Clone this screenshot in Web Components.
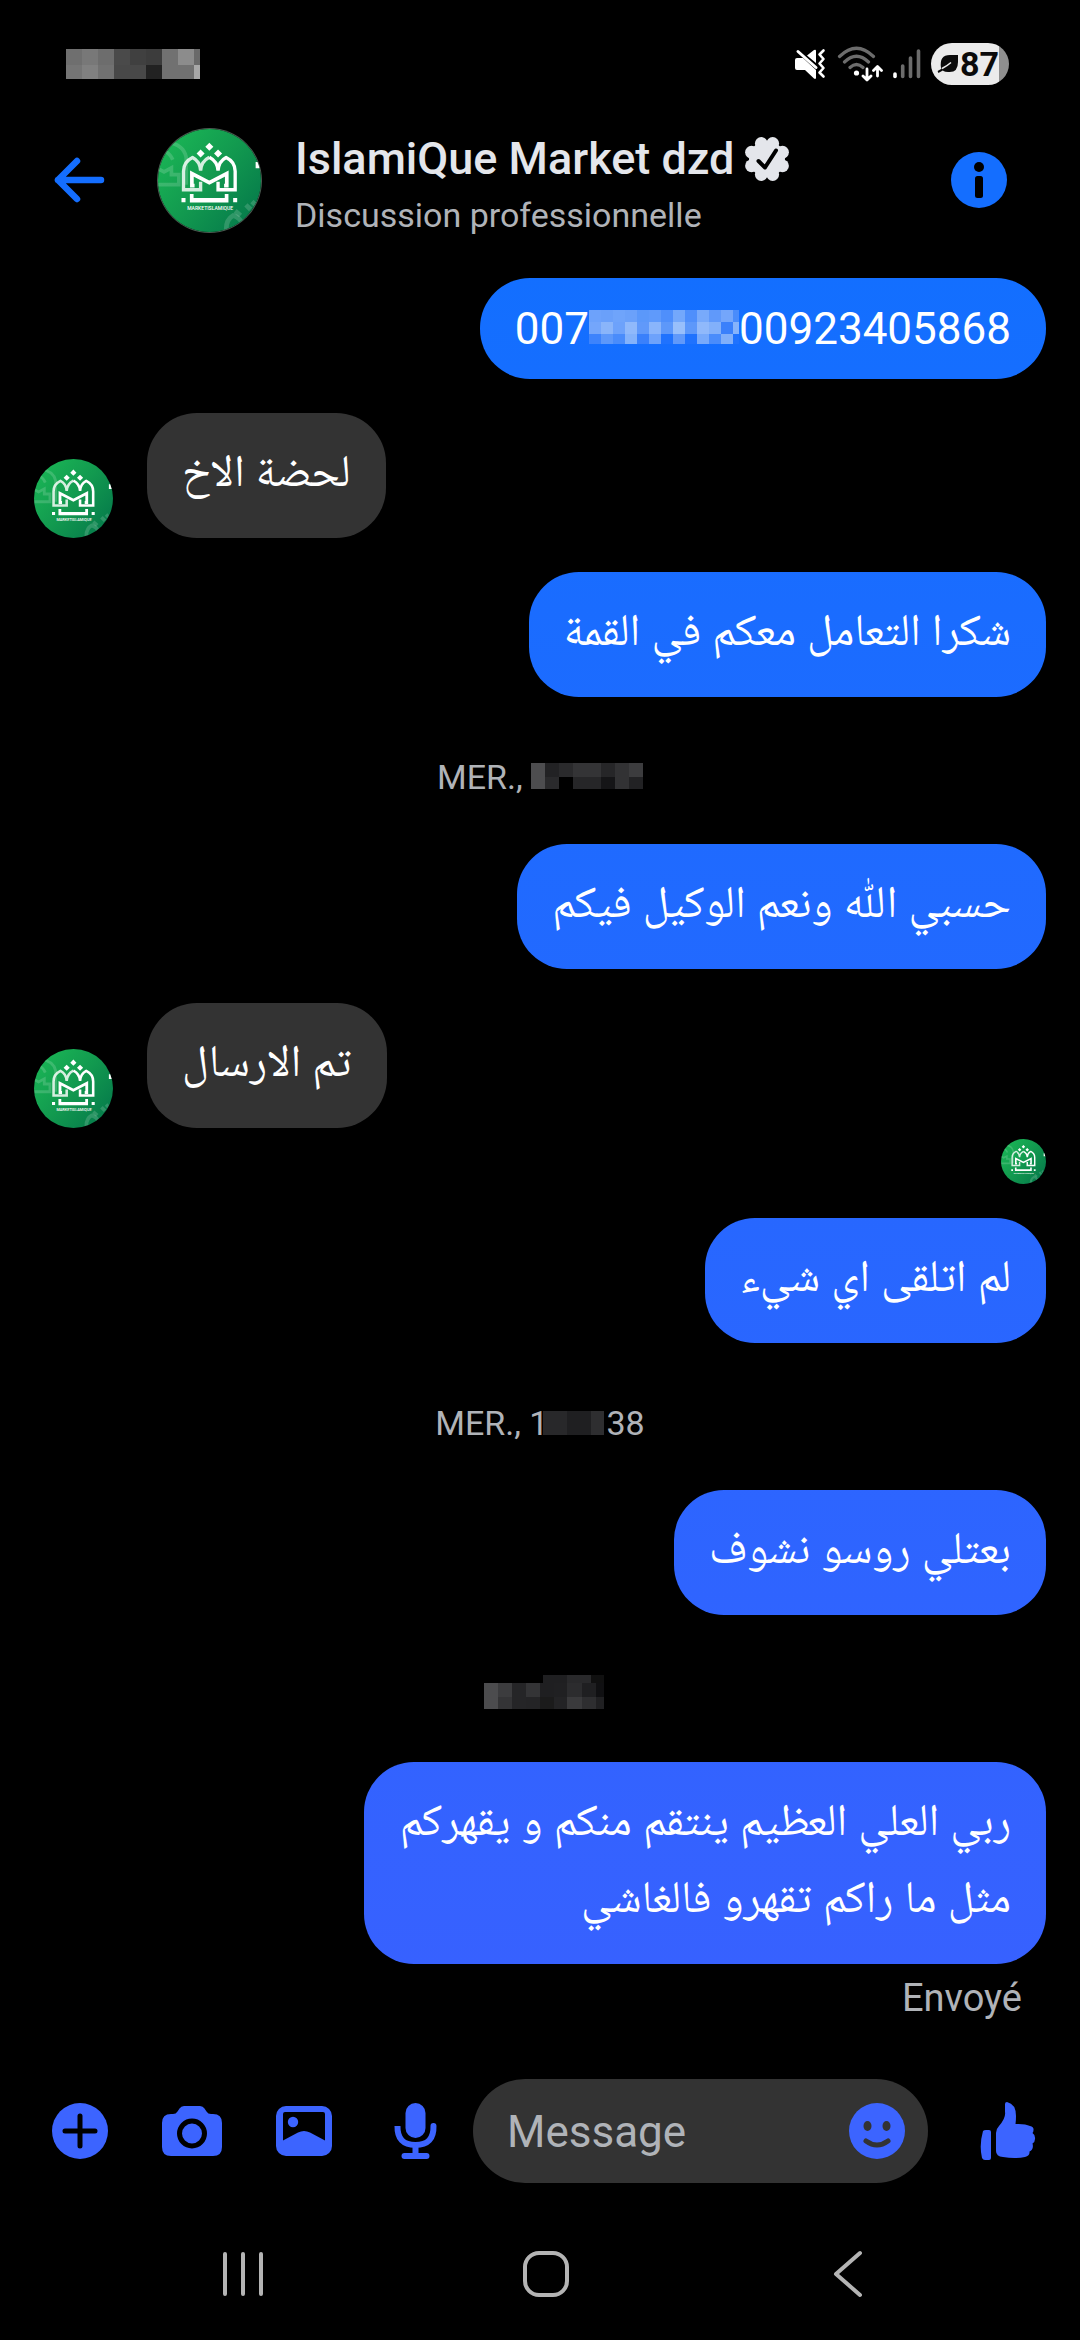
<!DOCTYPE html>
<html lang="fr">
<head>
<meta charset="utf-8">
<meta name="viewport" content="width=device-width, initial-scale=1">
<title>IslamiQue Market dzd</title>
<style>
  html { background: #000; }
  body {
    margin: 0;
    min-height: 100vh;
    display: flex;
    flex-direction: column;
    background: #000;
    color: #fff;
    font-family: Roboto, "Noto Naskh Arabic", "Noto Naskh Arabic UI", "DejaVu Sans", sans-serif;
    --accent-top: #146eff;
    --accent-bottom: #3c64ff;
    --muted: #b0b3b8;
    --surface: #333333;
  }
  chat-thread { flex: 1; }
</style>
</head>
<body>
<status-bar></status-bar>
<chat-header name="IslamiQue Market dzd" subtitle="Discussion professionnelle"></chat-header>
<chat-thread>
  <chat-message side="out" lang="fr">007<pixel-mosaic cols="12 12 12 12 12 12 12 12 12 12 12 12 6" rows="12 12 10" cells="6da2fb 6aa0fa 6fa4fb 6ba1fa 5b98fa 5f9afb 4f8ffb 74a8fb 4f8ffb 78aafb 6099fa 74a6fb 4a8cfb / 74a6fb 8ab5fa 6da2fb 90b9fb 6099fa 8ab5fb 5d98fa 98bffb 5d98fa 90b9fb 82b0fa 3a80fb 86b3fb / 3d83fc 5d98fa 4a8cfb 84b2fb 3a80fb 6da2fb 1f72fe 6099fa 1f72fe 78aafb 4a8cfb 80affa 1f72fe"></pixel-mosaic>00923405868</chat-message>
  <chat-message side="in" lang="ar">لحضة الاخ</chat-message>
  <chat-message side="out" lang="ar">شكرا التعامل معكم في القمة</chat-message>
  <chat-date>MER., <pixel-mosaic cols="14 14 14 14 14 14 14 14" rows="14 12" cells="4d4d4f 222224 2a2a2c 343436 343436 262628 323234 3c3c3e / 4d4d4f 2a2a2c 000000 262628 262628 151517 323234 222224"></pixel-mosaic></chat-date>
  <chat-message side="out" lang="ar">حسبي اللّٰه ونعم الوكيل فيكم</chat-message>
  <chat-message side="in" lang="ar">تم الارسال</chat-message>
  <seen-marker></seen-marker>
  <chat-message side="out" lang="ar">لم اتلقى اي شيء</chat-message>
  <chat-date>MER., 1<pixel-mosaic overlap cols="24 24 13" rows="24" cells="28282a 1f1f21 2e2e30"></pixel-mosaic>38</chat-date>
  <chat-message side="out" lang="ar">بعتلي روسو نشوف</chat-message>
  <chat-date><pixel-mosaic cols="8 14 14 14 14 3 11 13 15 9 5 8" rows="8 14 12" cells="000000 000000 000000 000000 000000 000000 1f1f21 1f1f21 29292b 29292b 101010 101010 / 000000 4c4c4e 3c3c3e 252527 343436 1f1f21 1f1f21 202022 2c2c2e 1f1f21 1f1f21 101012 / 000000 4c4c4e 343436 252527 242426 1b1b1b 1b1b1b 232325 3a3a3c 2e2e30 2e2e30 202022"></pixel-mosaic></chat-date>
  <chat-message side="out" lang="ar">ربي العلي العظيم ينتقم منكم و يقهركم مثل ما راكم تقهرو فالغاشي</chat-message>
  <delivery-state>Envoyé</delivery-state>
</chat-thread>
<chat-composer></chat-composer>
<system-nav></system-nav>

<script>
  const define = (name, html, setup) => {
    const template = document.createElement('template');
    template.innerHTML = html;
    customElements.define(name, class extends HTMLElement {
      constructor() {
        super();
        this.attachShadow({ mode: 'open' }).append(template.content.cloneNode(true));
      }
      connectedCallback() { if (setup) setup(this, this.shadowRoot); }
    });
  };

  /* Grid of flat cells that hides a piece of text; its bottom edge sits on the baseline. */
  define('pixel-mosaic', `
    <style>
      :host { display: inline-block; overflow: hidden; vertical-align: baseline; }
      :host([overlap]) { margin: 0 2px 0 -5px; }
      div { display: grid; }
    </style>
    <div></div>`,
    (host, root) => {
      const px = list => list.split(' ').map(n => n + 'px').join(' ');
      const grid = root.querySelector('div');
      grid.style.gridTemplateColumns = px(host.getAttribute('cols'));
      grid.style.gridTemplateRows = px(host.getAttribute('rows'));
      for (const color of host.getAttribute('cells').match(/[0-9a-f]{6}/g)) {
        const cell = document.createElement('i');
        cell.style.background = '#' + color;
        grid.append(cell);
      }
    });

  /* Round shop logo; its size comes from --size. */
  define('market-avatar', `
    <style>
      :host { display: block; width: var(--size, 79px); height: var(--size, 79px); border-radius: 50%; overflow: hidden; flex: none; }
      svg { display: block; width: 100%; height: 100%; }
      text { font: 500 15px Roboto, sans-serif; }
    </style>
    <svg viewBox="22 24 307 307" role="img" aria-label="Market Islamique">
      <defs>
        <linearGradient id="g" x1="0" y1="0.1" x2="1" y2="0.9">
          <stop offset="0" stop-color="#1bb856"/><stop offset=".5" stop-color="#12994f"/><stop offset="1" stop-color="#04774a"/>
        </linearGradient>
      </defs>
      <rect x="22" y="24" width="307" height="307" fill="url(#g)"/>
      <g fill="none" stroke="#fff" stroke-opacity=".16" stroke-width="11">
        <path d="M22 190H84V160H62V140L40 152L22 142M50 64Q98 70 106 108V190M22 96Q50 80 66 116"/>
        <path d="M226 331Q222 296 246 282Q268 288 276 312M268 331Q270 300 296 290" stroke-width="14"/>
        <path d="M284 250l14 14M302 240l14 14M252 268l16 14" stroke-width="14"/>
      </g>
      <path d="M313 122h9v6h7v13h-16z" fill="#fff"/>
      <g fill="#fff">
        <path d="M175 65l12 12-12 12-12-12zM149 85l12 12-12 12-12-12zM201 85l12 12-12 12-12-12z"/>
        <path d="M92 230h12v12H92zM246 230h12v12h-12z"/>
        <path d="M117 218h11v12h93v-12h11v25H117z"/>
      </g>
      <g fill="none" stroke="#fff" stroke-width="10">
        <path d="M175 108Q199 120 201 148Q203 120 225 109Q252 122 252 150V205H201V181"/>
        <path d="M131 193H123V157L175 184L227 157V193H219" stroke-width="11"/>
        <path d="M175 108Q151 120 149 148Q147 120 125 109Q98 122 98 150V205H149V181" stroke-opacity=".82"/>
      </g>
      <text x="109" y="265" fill="#fff">MARKETISLAMIQUE</text>
    </svg>`);

  define('status-bar', `
    <style>
      :host { display: block; }
      .bar { display: flex; align-items: center; justify-content: space-between; height: 85px; padding: 43px 71px 0 66px; box-sizing: border-box; }
      .bar > * { flex: none; }
      .clock { display: flex; }
      .icons { display: flex; align-items: center; gap: 10px; }
      svg { display: block; }
      .battery { display: flex; align-items: center; justify-content: flex-end; box-sizing: border-box; width: 78px; height: 42px; padding: 0 10px 0 5px; border-radius: 21px; background: linear-gradient(90deg, #ebebeb 68px, #8f8f8f 68px); color: #0a0a0a; font: 700 34px/42px Roboto, sans-serif; }
    </style>
    <div class="bar">
      <div class="clock"><pixel-mosaic cols="16 16 16 16 16 16 16 16 6" rows="16 14" cells="6f6f6f 787878 6d6d6d 4a4a4a 404040 3c3c3c 717171 8c8c8c 6a6a6a / 757575 808080 717171 484848 484848 222222 717171 717171 a8a8a8"></pixel-mosaic></div>
      <div class="icons">
        <svg width="33" height="32" viewBox="0 0 33 32" fill="#fff">
          <path d="M1 12q0-2 2-2h6L22 22v8q-.500 1.500-2 .5L11 22H3q-2 0-2-2zM13 7.500L20 2q2-1 2 1v12z"/>
          <path d="M4 3.500L22 19.500" stroke="#fff" stroke-width="3" stroke-linecap="round"/>
          <path d="M29.500 2.500l-4 4 4 4.500-4 4.500 4 4.500-4 4.500 4 4" fill="none" stroke="#fff" stroke-width="2.600" stroke-linecap="round" stroke-linejoin="round"/>
        </svg>
        <svg width="46" height="36" viewBox="0 0 46 36" fill="none" stroke-linecap="round">
          <g stroke="#6c6c6c" stroke-width="3.200"><path d="M2.500 10.500Q19.500-6 36.500 10.500M7.500 16Q19.500 4.500 31.500 16M13 21.500Q19.500 15.500 26 21.500"/></g>
          <circle cx="19.500" cy="27" r="2.600" fill="#fff"/>
          <path d="M30 23v10M26 30l4 4 4-4M40.500 30V21M36.500 24.500l4-4 4 4" stroke="#fff" stroke-width="2.800" stroke-linejoin="round"/>
        </svg>
        <svg width="28" height="30" viewBox="0 0 28 30" stroke-width="3.600" stroke-linecap="round">
          <path d="M2 25v2.500" stroke="#fff"/><path d="M9.700 17v10.500M17.500 9v18.500M25.500 2v25.500" stroke="#6c6c6c"/>
        </svg>
        <div class="battery">
          <svg width="23" height="20" viewBox="0 0 23 20"><path d="M4 14Q2 1 13 1H21V8Q21 19 11 18Q8 18 6.500 17" fill="#0a0a0a"/><path d="M1 18Q8 15 14 9" fill="none" stroke="#0a0a0a" stroke-width="2"/><path d="M5 14.500Q10 12 14 8.500" fill="none" stroke="#ebebeb" stroke-width="1.600"/></svg>
          <span>87</span>
        </div>
      </div>
    </div>`);

  define('chat-header', `
    <style>
      :host { display: block; }
      header { display: flex; align-items: center; height: 190px; padding: 0 73px 0 53px; box-sizing: border-box; }
      button { all: unset; display: block; flex: none; cursor: pointer; }
      svg { display: block; }
      market-avatar { --size: 103px; margin-left: 53px; box-shadow: 0 0 0 1px #4a5a50; }
      .who { flex: 1; min-width: 0; margin-left: 34px; padding-top: 7px; }
      h1 { display: flex; align-items: center; gap: 11px; margin: 0; font-weight: 500; font-size: 45px; line-height: 53px; color: #e4e6eb; white-space: nowrap; }
      p { margin: 10px 0 0; font-size: 34px; line-height: 40px; color: var(--muted); }
    </style>
    <header>
      <button aria-label="Retour"><svg width="52" height="48" viewBox="0 0 52 48"><path d="M24 5L5 24L24 43M5 24H48" fill="none" stroke="#146eff" stroke-width="6.500" stroke-linecap="round" stroke-linejoin="round"/></svg></button>
      <market-avatar></market-avatar>
      <div class="who">
        <h1><span id="name"></span><svg width="44" height="44" viewBox="-22 -22 44 44"><g fill="#e4e6eb"><circle r="18"/><circle cx="5.700" cy="-15.500" r="6.400"/><circle cx="15.500" cy="-6.800" r="6.400"/><circle cx="15.500" cy="6.800" r="6.400"/><circle cx="5.700" cy="15.500" r="6.400"/><circle cx="-5.700" cy="15.500" r="6.400"/><circle cx="-15.500" cy="6.800" r="6.400"/><circle cx="-15.500" cy="-6.800" r="6.400"/><circle cx="-5.700" cy="-15.500" r="6.400"/></g><path d="M-8.500 2L-2 8.500L9-8.500" fill="none" stroke="#000" stroke-width="4" stroke-linecap="round" stroke-linejoin="round"/></svg></h1>
        <p id="subtitle"></p>
      </div>
      <button aria-label="Informations"><svg width="56" height="56" viewBox="0 0 56 56"><circle cx="28" cy="28" r="28" fill="#146eff"/><circle cx="28" cy="15" r="5"/><rect x="24" y="24" width="8" height="22" rx="2.500"/></svg></button>
    </header>`,
    (host, root) => {
      root.getElementById('name').textContent = host.getAttribute('name');
      root.getElementById('subtitle').textContent = host.getAttribute('subtitle');
    });

  define('chat-thread', `
    <style>
      :host { display: block; }
      main { display: flex; flex-direction: column; gap: 34px; padding: 3px 34px 0; }
      ::slotted(seen-marker), ::slotted(delivery-state) { margin-top: -23px; }
    </style>
    <main><slot></slot></main>`);

  define('chat-message', `
    <style>
      :host { display: flex; align-items: flex-end; gap: 34px; }
      :host([side="out"]) { justify-content: flex-end; }
      :host([side="out"]) market-avatar { display: none; }
      .bubble { box-sizing: border-box; max-width: 682px; padding: 25px 35px 23px; border-radius: 50px; background: var(--surface); font-size: 44px; line-height: 53px; }
      :host([side="out"]) .bubble { background: linear-gradient(#0d71ff, #3f5eff) fixed; }
      :host([lang="ar"]) .bubble { direction: rtl; padding: 19px 35px 29px; font-size: 45px; line-height: 77px; }
    </style>
    <market-avatar></market-avatar>
    <div class="bubble"><slot></slot></div>`);

  define('chat-date', `
    <style>
      :host { display: block; padding: 26px 0 13px; text-align: center; font-size: 34px; line-height: 40px; height: 40px; color: var(--muted); }
    </style>
    <slot></slot>`);

  define('seen-marker', `
    <style>:host { display: flex; justify-content: flex-end; } market-avatar { --size: 45px; }</style>
    <market-avatar></market-avatar>`);

  define('delivery-state', `
    <style>:host { display: block; padding-right: 24px; text-align: right; font-size: 38px; line-height: 46px; color: var(--muted); }</style>
    <slot></slot>`);

  define('chat-composer', `
    <style>
      :host { display: block; }
      form { display: flex; align-items: center; height: 154px; padding: 0 44px 0 51px; box-sizing: border-box; }
      .tools { display: flex; gap: 52px; padding-right: 28px; }
      button { all: unset; display: block; flex: none; cursor: pointer; }
      svg { display: block; fill: var(--accent-bottom); }
      .field { flex: 1; min-width: 0; display: flex; align-items: center; height: 104px; box-sizing: border-box; padding: 0 23px 0 34px; border-radius: 52px; background: var(--surface); }
      input { all: unset; flex: 1; min-width: 0; font-size: 44px; line-height: 52px; color: #fff; padding-top: 2px; }
      input::placeholder { color: var(--muted); opacity: 1; }
      .like { margin-left: 51px; }
    </style>
    <form onsubmit="return false">
      <div class="tools">
        <button type="button" aria-label="Plus"><svg width="58" height="58" viewBox="0 0 58 58"><circle cx="29" cy="29" r="28"/><path d="M29 14v30M14 29h30" stroke="#000" stroke-width="5" stroke-linecap="round"/></svg></button>
        <button type="button" aria-label="Appareil photo"><svg width="62" height="58" viewBox="0 0 62 58"><path d="M23 4H39Q42 4 43.500 6.500L45.500 9.500Q47 12 50 12H52Q61 12 61 21V45Q61 54 52 54H10Q1 54 1 45V21Q1 12 10 12H12Q15 12 16.500 9.500L18.500 6.500Q20 4 23 4Z"/><circle cx="31" cy="31.500" r="12.500" fill="none" stroke="#000" stroke-width="5"/></svg></button>
        <button type="button" aria-label="Galerie"><svg width="58" height="58" viewBox="0 0 58 58"><rect x="1" y="4" width="56" height="50" rx="10"/><path d="M10 10H48Q50 10 50 12V38.500L35 30.500Q29 27.500 23 30.500L8 38.500V12Q8 10 10 10Z" fill="#000"/><circle cx="18" cy="20" r="5.200"/></svg></button>
        <button type="button" aria-label="Micro"><svg width="60" height="58" viewBox="-1 0 60 58"><rect x="19.500" y="1" width="20" height="35" rx="10"/><path d="M11.500 25V24Q11 43 29.500 43T47.500 24M29.500 43V53M18.500 54H40.500" fill="none" stroke="#3c64ff" stroke-width="6" stroke-linecap="round"/></svg></button>
      </div>
      <div class="field">
        <input type="text" placeholder="Message" aria-label="Message">
        <button type="button" aria-label="Emoji"><svg width="56" height="56" viewBox="0 0 56 56"><circle cx="28" cy="28" r="28"/><g fill="#333"><ellipse cx="18.500" cy="23" rx="4" ry="5"/><ellipse cx="37.500" cy="23" rx="4" ry="5"/></g><path d="M17 38Q28 46 39 38" fill="none" stroke="#333" stroke-width="5" stroke-linecap="round"/></svg></button>
      </div>
      <button class="like" type="button" aria-label="J’aime"><svg width="57" height="60" viewBox="0 0 57 60"><path d="M4 30Q5 29 7 29H10Q12 29 12 31V57Q12 59 10 59H6Q4 59 3 57Q0 44 4 30ZM26 3Q26 1 28 1Q37 3 37 15Q37 19 36.500 23Q46 22.500 51 25Q55 26 54.500 29Q54.500 31 53.500 32Q56.500 34 56 38Q56 41 53.500 42.500Q54.500 46 53 48.500Q52 50 50.500 50.500Q51 55 46 56Q36 58 24 56Q17 55.500 17 50V32Q17 28 20 25Q27 17 26 11Z"/></svg></button>
    </form>`);

  define('system-nav', `
    <style>
      :host { display: block; }
      nav { display: flex; align-items: center; justify-content: space-between; height: 132px; padding: 0 208px 0 219px; }
      button { all: unset; display: block; cursor: pointer; }
      svg { display: block; fill: none; stroke: #b4b4b4; stroke-width: 4; stroke-linecap: round; stroke-linejoin: round; }
    </style>
    <nav>
      <button aria-label="Récents"><svg width="48" height="48" viewBox="0 0 48 48"><path d="M6 4V44M24 4V44M42 4V44"/></svg></button>
      <button aria-label="Accueil"><svg width="48" height="48" viewBox="0 0 48 48"><rect x="3" y="3" width="42" height="42" rx="14"/></svg></button>
      <button aria-label="Précédent"><svg width="48" height="48" viewBox="0 0 48 48"><path d="M36 3L12 24L36 45"/></svg></button>
    </nav>`);
</script>
</body>
</html>
